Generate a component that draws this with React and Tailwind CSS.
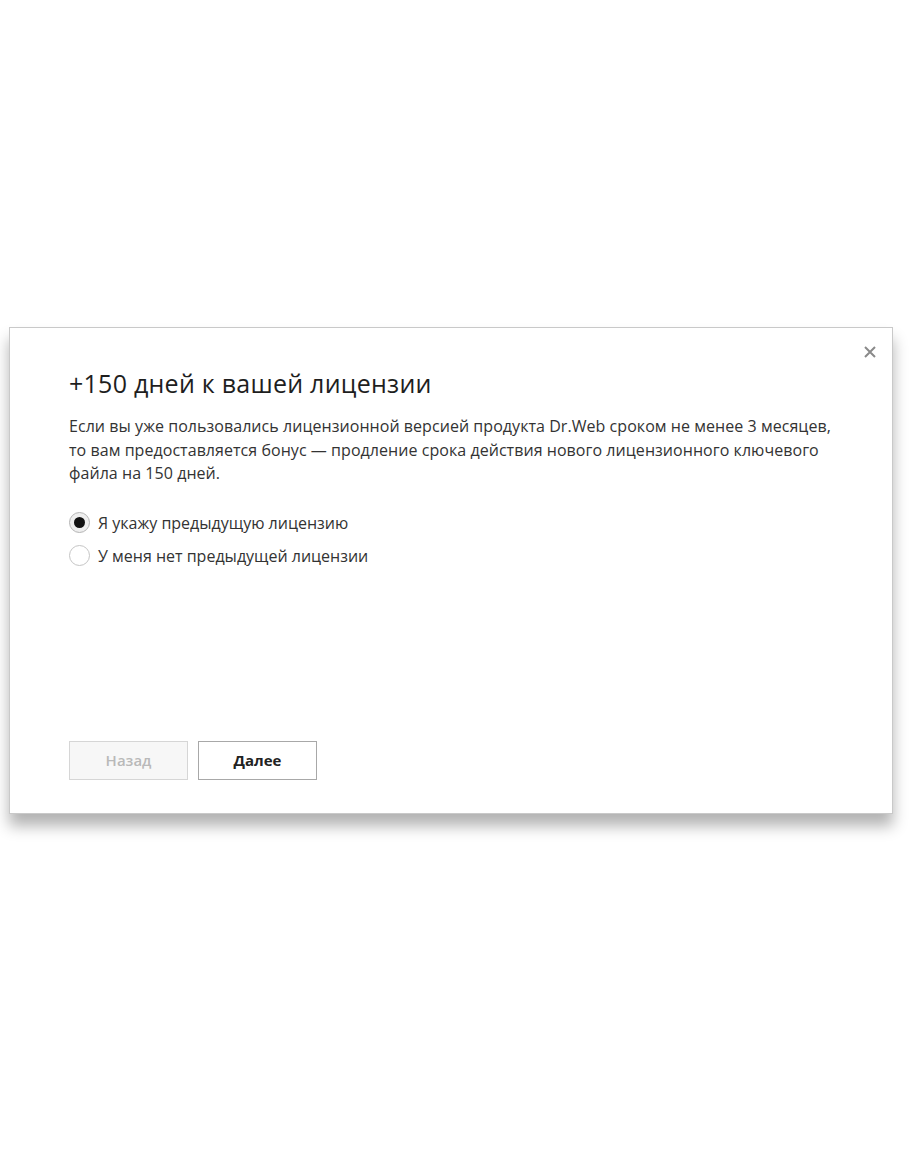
export default function App() {
  return (
    <div className="w-[910px] h-[1155px] bg-white overflow-hidden" style={{ fontFamily: '"Open Sans", "Noto Sans", sans-serif' }}>
      <div className="relative ml-[9px] mt-[327px] w-[884px] h-[487px] bg-white border border-[#c9c9c9] shadow-[0_12px_14px_rgba(0,0,0,0.3)] pl-[59px] pt-[40px]">
        <button className="absolute right-[15px] top-[17px] w-[14px] h-[14px] text-[#8a8a8a]">
          <svg viewBox="0 0 14 14" width="14" height="14">
            <path d="M2 2 L12 12 M12 2 L2 12" stroke="currentColor" strokeWidth="2" strokeLinecap="butt" />
          </svg>
        </button>
        <h1 className="text-[25px] leading-[30px] text-[#1e1e1e] tracking-[0.25px]">+150 дней к вашей лицензии</h1>
        <p className="mt-[17px] w-[800px] whitespace-nowrap text-[16px] leading-[23.5px] text-[#333] tracking-[0.05px]">
          Если вы уже пользовались лицензионной версией продукта Dr.Web сроком не менее 3 месяцев,
          <br />
          то вам предоставляется бонус — продление срока действия нового лицензионного ключевого
          <br />
          файла на 150 дней.
        </p>
        <div className="mt-[25px] flex flex-col gap-[9px]">
          <label className="flex items-center gap-[8px] h-[24px] text-[16px] text-[#333]">
            <span className="w-[21px] h-[21px] rounded-full border border-[#b5b5b5] bg-[#eee] flex items-center justify-center">
              <span className="w-[11px] h-[11px] rounded-full bg-[#111]" />
            </span>
            Я укажу предыдущую лицензию
          </label>
          <label className="flex items-center gap-[8px] h-[24px] text-[16px] text-[#333]">
            <span className="w-[21px] h-[21px] rounded-full border border-[#c5c5c5] bg-white" />
            У меня нет предыдущей лицензии
          </label>
        </div>
        <div className="mt-[173px] flex gap-[10px]">
          <button className="w-[119px] h-[39px] border border-[#d6d6d6] bg-[#f7f7f7] text-[#b9b9b9] text-[15px] font-semibold">Назад</button>
          <button className="w-[119px] h-[39px] border border-[#a8a8a8] bg-white text-[#222] text-[15px] font-bold">Далее</button>
        </div>
      </div>
    </div>
  );
}
